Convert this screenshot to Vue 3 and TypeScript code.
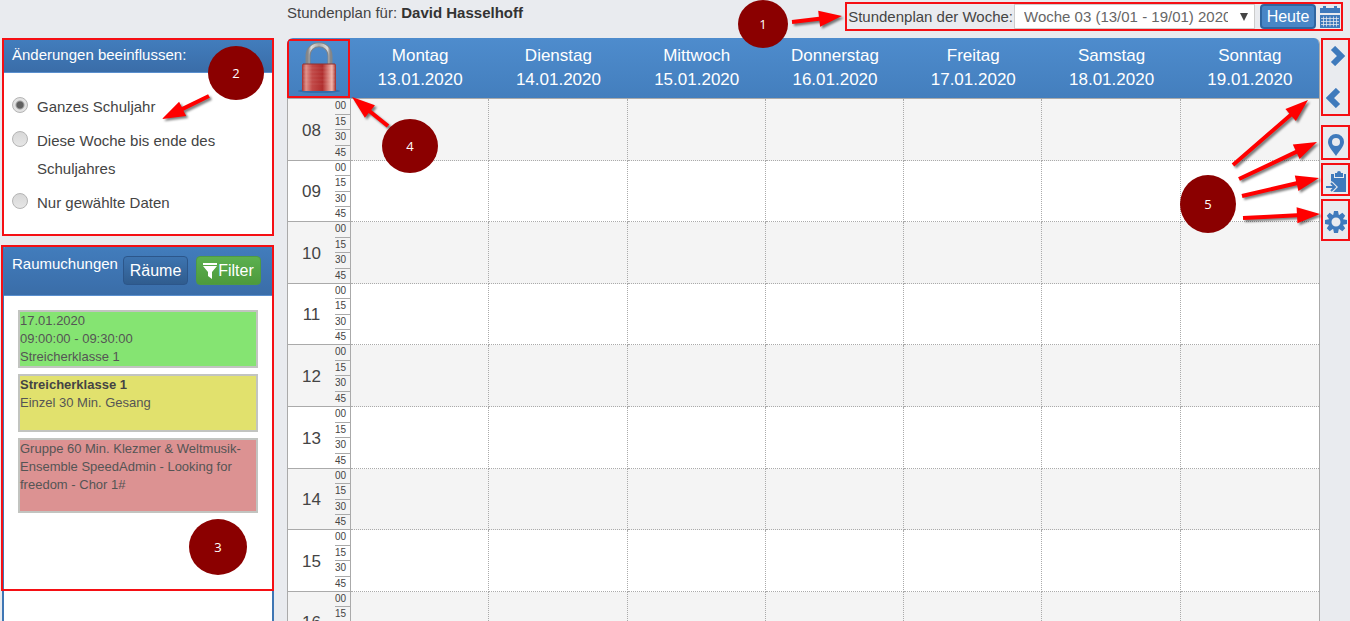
<script setup lang="ts">
import { ref } from 'vue'

interface Day { name: string; date: string }
interface Arrow { x1: number; y1: number; x2: number; y2: number }
interface Badge { n: number; cx: number; cy: number; rx: number; ry: number }

const scope = ref('year')
const scopes = [
  { id: 'year', label: 'Ganzes Schuljahr' },
  { id: 'rest', label: 'Diese Woche bis ende des Schuljahres' },
  { id: 'dates', label: 'Nur gewählte Daten' },
]

const days: Day[] = [
  { name: 'Montag', date: '13.01.2020' },
  { name: 'Dienstag', date: '14.01.2020' },
  { name: 'Mittwoch', date: '15.01.2020' },
  { name: 'Donnerstag', date: '16.01.2020' },
  { name: 'Freitag', date: '17.01.2020' },
  { name: 'Samstag', date: '18.01.2020' },
  { name: 'Sonntag', date: '19.01.2020' },
]
const hours = ['08', '09', '10', '11', '12', '13', '14', '15', '16']
const quarters = ['00', '15', '30', '45']

const leftBadges: Badge[] = [
  { n: 2, cx: 236, cy: 73, rx: 28, ry: 27 },
  { n: 3, cx: 218, cy: 547, rx: 29, ry: 28 },
  { n: 4, cx: 410, cy: 146, rx: 28, ry: 27 },
]
const leftArrows: Arrow[] = [
  { x1: 209, y1: 96, x2: 162, y2: 119 },
  { x1: 388, y1: 126, x2: 352, y2: 97 },
]
const rightBadges: Badge[] = [
  { n: 1, cx: 763, cy: 24, rx: 25, ry: 24 },
  { n: 5, cx: 1208, cy: 204, rx: 28, ry: 29 },
]
const rightArrows: Arrow[] = [
  { x1: 792, y1: 22, x2: 842, y2: 16 },
  { x1: 1233, y1: 165, x2: 1308, y2: 100 },
  { x1: 1239, y1: 179, x2: 1317, y2: 142 },
  { x1: 1242, y1: 196, x2: 1319, y2: 178 },
  { x1: 1243, y1: 218, x2: 1320, y2: 214 },
]

// Outline of an arrow: a 4px shaft that ends in a triangular head.
function arrowPoints(a: Arrow): string {
  const len = Math.hypot(a.x2 - a.x1, a.y2 - a.y1)
  const ux = (a.x2 - a.x1) / len
  const uy = (a.y2 - a.y1) / len
  const at = (d: number, side: number) =>
    `${(a.x1 + ux * d - uy * side).toFixed(1)},${(a.y1 + uy * d + ux * side).toFixed(1)}`
  const neck = len - 23
  return [at(0, -2), at(neck, -2), at(neck, -8), at(len, 0), at(neck, 8), at(neck, 2), at(0, 2)].join(' ')
}
</script>

<template>
  <div class="page">
    <aside class="sidebar">
      <section class="panel scope-panel marked">
        <h2 class="panel-head">Änderungen beeinflussen:</h2>
        <div class="scope-list">
          <label v-for="s in scopes" :key="s.id" class="scope">
            <input v-model="scope" type="radio" name="scope" :value="s.id" />
            <span>{{ s.label }}</span>
          </label>
        </div>
      </section>

      <section class="panel rooms-panel">
        <div class="rooms-area marked">
          <div class="panel-head rooms-head">
            <h2>Raumuchungen</h2>
            <button type="button" class="btn btn-rooms">Räume</button>
            <button type="button" class="btn btn-filter">
              <svg width="14" height="16" viewBox="0 0 14 16" aria-hidden="true">
                <path d="M0 0h14v2H0zM0 3h14L9 9v7l-4-3V9z" fill="#fff" />
              </svg>Filter
            </button>
          </div>
          <div class="cards">
            <article class="card green">17.01.2020<br />09:00:00 - 09:30:00<br />Streicherklasse 1</article>
            <article class="card yellow"><strong>Streicherklasse 1</strong><br />Einzel 30 Min. Gesang</article>
            <article class="card red">Gruppe 60 Min. Klezmer &amp; Weltmusik-Ensemble SpeedAdmin - Looking for freedom - Chor 1#</article>
          </div>
        </div>
      </section>
    </aside>

    <header class="topbar">
      <div class="title">Stundenplan für: <strong>David Hasselhoff</strong></div>
      <div class="week marked">
        <label for="week">Stundenplan der Woche:</label>
        <span class="select-wrap">
          <select id="week">
            <option>Woche 03 (13/01 - 19/01) 2020</option>
          </select>
          <svg class="caret" width="8" height="8" viewBox="0 0 8 8" aria-hidden="true"><path d="M0 0h8L4 8z" fill="#444" /></svg>
        </span>
        <button type="button" class="btn btn-today">Heute</button>
        <button type="button" class="icon-btn" aria-label="Kalender">
          <svg width="20" height="22" viewBox="0 0 20 22" fill="#3f7abc" aria-hidden="true">
            <path d="M0 2h3V0h3v2h8V0h3v2h3v5H0zM0 9h20v13H0z" />
            <path d="M1 12.500h18M1 15.500h18M1 18.500h18" stroke="#e9ebef" stroke-opacity=".75" />
            <path d="M3.500 10.500v10M6.500 10.500v10M10 10.500v10M13.500 10.500v10M16.500 10.500v10" stroke="#e9ebef" stroke-opacity=".75" />
          </svg>
        </button>
      </div>
    </header>

    <main class="schedule">
      <table>
        <colgroup>
          <col class="col-hour" /><col class="col-quarter" /><col v-for="d in days" :key="d.date" />
        </colgroup>
        <thead>
          <tr>
            <th colspan="2" class="lock-cell">
              <button type="button" class="lock marked" aria-label="Gesperrt">
                <svg width="44" height="52" viewBox="0 0 44 52" aria-hidden="true">
                  <defs>
                    <linearGradient id="lockBody">
                      <stop offset="0" stop-color="#a52f30" />
                      <stop offset=".12" stop-color="#e09088" />
                      <stop offset=".3" stop-color="#c24a48" />
                      <stop offset=".6" stop-color="#b02e2e" />
                      <stop offset=".88" stop-color="#f3b5aa" />
                      <stop offset="1" stop-color="#9d2929" />
                    </linearGradient>
                    <linearGradient id="lockBow">
                      <stop offset="0" stop-color="#87888a" />
                      <stop offset=".15" stop-color="#ddd" />
                      <stop offset=".5" stop-color="#aaa" />
                      <stop offset=".88" stop-color="#ddd" />
                      <stop offset="1" stop-color="#87888a" />
                    </linearGradient>
                  </defs>
                  <ellipse cx="22" cy="49" rx="21" ry="2" fill="#285f9c" opacity=".6" />
                  <path d="M11 24V14C11 -1 33 -1 33 14v10" fill="none" stroke="#808488" stroke-width="5" />
                  <path d="M11 24V14C11 -1 33 -1 33 14v10" fill="none" stroke="url(#lockBow)" stroke-width="3" />
                  <rect x="5" y="22" width="34" height="27" rx="1" fill="url(#lockBody)" />
                  <path d="M6 22h32" stroke="#8d3030" />
                  <path d="M6 26h32M6 30h32M6 34h32M6 38h32M6 42h32" stroke="#fff" stroke-opacity=".08" />
                </svg>
              </button>
            </th>
            <th v-for="d in days" :key="d.date" scope="col">{{ d.name }}<br />{{ d.date }}</th>
          </tr>
        </thead>
        <tbody>
          <tr v-for="h in hours" :key="h">
            <th scope="row" class="hour">{{ h }}</th>
            <td class="quarter-cell">
              <div class="quarters"><span v-for="q in quarters" :key="q">{{ q }}</span></div>
            </td>
            <td v-for="d in days" :key="d.date" class="slot"></td>
          </tr>
        </tbody>
      </table>
    </main>

    <nav class="rail" aria-label="Werkzeuge">
      <div class="rail-group arrows marked">
        <button type="button" class="icon-btn" aria-label="Nächste Woche">
          <svg width="20" height="20" viewBox="0 0 20 20" aria-hidden="true"><path d="M7 2l8 8-8 8" fill="none" stroke="#3f7abc" stroke-width="6" /></svg>
        </button>
        <button type="button" class="icon-btn" aria-label="Vorherige Woche">
          <svg width="20" height="20" viewBox="0 0 20 20" aria-hidden="true"><path d="M12 2l-8 8 8 8" fill="none" stroke="#3f7abc" stroke-width="6" /></svg>
        </button>
      </div>
      <div class="rail-group pin marked">
        <button type="button" class="icon-btn" aria-label="Ort">
          <svg width="16" height="22" viewBox="0 0 16 22" aria-hidden="true"><path fill="#3f7abc" fill-rule="evenodd" d="M8 0a8 8 0 0 1 8 8c0 5-5 9-8 14C5 17 0 13 0 8a8 8 0 0 1 8-8zm0 4a4 4 0 1 0 0 8 4 4 0 0 0 0-8z" /></svg>
        </button>
      </div>
      <div class="rail-group paste marked">
        <button type="button" class="icon-btn" aria-label="Einfügen">
          <svg width="20" height="21" viewBox="0 0 20 21" fill="#3f7abc" aria-hidden="true">
            <path d="M5 3h3v4h10V3h2v18H7l5-5-5-5-2-1z" />
            <path d="M9 2h2a2 2 0 0 1 4 0h2v4H9z" />
            <path d="M0 16h8M5 12l4 4-4 4" fill="none" stroke="#3f7abc" stroke-width="2" />
          </svg>
        </button>
      </div>
      <div class="rail-group gear marked">
        <button type="button" class="icon-btn" aria-label="Einstellungen">
          <svg width="22" height="22" viewBox="-11 -11 22 22" aria-hidden="true">
            <circle r="6" fill="none" stroke="#3f7abc" stroke-width="3" />
            <path v-for="i in 8" :key="i" d="M-3 -6l1-5h4l1 5z" fill="#3f7abc" :transform="`rotate(${i * 45})`" />
          </svg>
        </button>
      </div>
    </nav>

    <svg class="notes notes-left" width="450" height="621" viewBox="0 0 450 621">
      <polygon v-for="(a, i) in leftArrows" :key="i" class="arrow" :points="arrowPoints(a)" />
      <g v-for="b in leftBadges" :key="b.n">
        <ellipse :cx="b.cx" :cy="b.cy" :rx="b.rx" :ry="b.ry" fill="#8b0000" />
        <text :x="b.cx" :y="b.cy + 5">{{ b.n }}</text>
      </g>
    </svg>
    <svg class="notes notes-right" width="650" height="621" viewBox="700 0 650 621">
      <polygon v-for="(a, i) in rightArrows" :key="i" class="arrow" :points="arrowPoints(a)" />
      <g v-for="b in rightBadges" :key="b.n">
        <ellipse :cx="b.cx" :cy="b.cy" :rx="b.rx" :ry="b.ry" fill="#8b0000" />
        <text :x="b.cx" :y="b.cy + 5">{{ b.n }}</text>
      </g>
    </svg>
  </div>
</template>

<style>
body {
  margin: 0;
  background: #e9ebef;
}
</style>

<style scoped>
.page {
  position: relative;
  display: grid;
  grid-template-columns: 287px minmax(0, 1fr) 30px;
  grid-template-rows: 38px minmax(0, 1fr);
  height: 100vh;
  overflow: hidden;
  background: #e9ebef;
  color: #444;
  font-family: "Liberation Sans", Arial, sans-serif;
  font-size: 15px;
}
.page * {
  box-sizing: border-box;
}
h2 {
  margin: 0;
  font-size: 15px;
  font-weight: 400;
}
button {
  font-family: inherit;
  cursor: pointer;
}
.marked {
  position: relative;
}
.marked::after {
  content: "";
  position: absolute;
  inset: 0;
  border: 2px solid #f50f14;
  pointer-events: none;
}

/* Sidebar */
.sidebar {
  grid-row: 1 / 3;
  display: flex;
  flex-direction: column;
  gap: 9px;
  padding: 38px 13px 0 2px;
}
.panel {
  background: #fff;
  border: 1px solid #3f76b4;
  border-radius: 5px 5px 0 0;
}
.scope-panel::after {
  inset: -1px;
}
.panel-head {
  height: 34px;
  padding: 0 9px;
  line-height: 32px;
  color: #fff;
  background: linear-gradient(#427dbd, #3a6da8);
  border-bottom: 1px solid #5a8fce;
  border-radius: 4px 4px 0 0;
}
.scope-list {
  display: flex;
  flex-direction: column;
  gap: 6px;
  padding: 20px 50px 18px 9px;
}
.scope {
  display: flex;
  align-items: flex-start;
  gap: 9px;
  line-height: 28px;
}
.scope input {
  flex: none;
  appearance: none;
  width: 16px;
  height: 16px;
  margin: 4px 0 0;
  border: 1px solid #b4b4b4;
  border-radius: 50%;
  background: linear-gradient(#d8d8d8, #e6e6e6);
}
.scope input:checked {
  background: radial-gradient(circle, #606060 0 3px, #e2e2e2 5px);
}
.rooms-panel {
  flex: 1;
  border-width: 0 2px;
}
.rooms-area {
  min-height: 346px;
}
.rooms-area::after {
  inset: 0 -2px 0 -3px;
}
.rooms-head {
  display: flex;
  align-items: flex-start;
  height: 51px;
  padding: 11px 11px 0 8px;
}
.rooms-head h2 {
  flex: 1;
  line-height: 15px;
}
.btn {
  display: inline-flex;
  align-items: center;
  justify-content: center;
  padding: 0;
  color: #fff;
  font-size: 16px;
  border-radius: 4px;
}
.btn-rooms,
.btn-filter {
  width: 65px;
  height: 29px;
}
.btn-rooms {
  margin-right: 8px;
  background: linear-gradient(#3d74b0, #305c8e);
  border: 1px solid #2c568a;
}
.btn-filter {
  gap: 1px;
  background: linear-gradient(#5cb04f, #4d9a3c);
  border: 1px solid #4e9a44;
}
.cards {
  display: flex;
  flex-direction: column;
  gap: 6px;
  padding: 14px 14px 0;
}
.card {
  min-height: 58px;
  border: 2px solid #c2c4c0;
  font-size: 13px;
  line-height: 18px;
  color: #555;
}
.card strong {
  color: #444;
}
.green {
  background: #85e472;
}
.yellow {
  background: #e1e16d;
}
.red {
  min-height: 75px;
  background: #dc9292;
}

/* Top bar */
.topbar {
  grid-column: 2 / 4;
  display: flex;
  justify-content: space-between;
  align-items: flex-start;
  padding: 2px 7px 0 0;
}
.title {
  line-height: 22px;
}
.title strong {
  color: #333;
}
.week {
  display: flex;
  align-items: center;
  height: 29px;
  padding: 0 3px;
}
.select-wrap {
  position: relative;
  width: 241px;
  margin: 0 5px 0 1px;
}
.week select {
  display: block;
  appearance: none;
  width: 100%;
  height: 25px;
  padding: 0 26px 0 9px;
  border: 1px solid #ccc;
  border-radius: 0;
  background: #fff;
  color: #666;
  font: 15px "Liberation Sans", Arial, sans-serif;
}
.caret {
  position: absolute;
  right: 7px;
  top: 9px;
  pointer-events: none;
}
.btn-today {
  width: 56px;
  height: 25px;
  margin-right: 4px;
  background: #4886c6;
  border: 2px solid #2f659f;
}
.icon-btn {
  display: flex;
  padding: 0;
  border: 0;
  background: none;
}

/* Timetable */
.schedule {
  grid-column: 2;
  overflow: hidden;
}
table {
  width: 100%;
  table-layout: fixed;
  border-spacing: 0;
  border-radius: 6px 6px 0 0;
  overflow: hidden;
  border-right: 1px solid #aaa;
}
.col-hour {
  width: 48px;
}
.col-quarter {
  width: 16px;
}
thead tr {
  background: linear-gradient(#4e8ccd, #437ebd);
}
thead th {
  height: 61px;
  padding: 0;
  border-bottom: 1px solid #aaa;
  color: #fff;
  font-size: 17px;
  font-weight: 400;
  line-height: 24px;
}
.lock {
  display: flex;
  justify-content: center;
  align-items: center;
  width: 63px;
  height: 59px;
  padding: 0;
  border: 0;
  background: none;
}
tbody tr {
  height: 61px;
  background: #fff;
}
tbody tr:nth-child(5n + 1),
tbody tr:nth-child(5n + 3),
tbody tr:nth-child(5n + 5) {
  height: 62px;
}
tbody tr:nth-child(odd) {
  background: #f4f4f4;
}
tbody th,
tbody td {
  height: inherit;
  padding: 0;
}
tbody .hour {
  padding-top: 2px;
  border-left: 1px solid #aaa;
  border-bottom: 1px solid #aaa;
  font-size: 17px;
  font-weight: 400;
}
.quarter-cell {
  border-right: 1px solid #aaa;
  border-bottom: 1px solid #aaa;
}
.quarters {
  display: flex;
  flex-direction: column;
  height: 100%;
  font-size: 10px;
  line-height: 14px;
}
.quarters span {
  flex: 1;
  border-bottom: 1px solid #aaa;
}
.quarters span:last-child {
  border-bottom: 0;
}
.slot {
  border-right: 1px dotted #aaa;
  border-bottom: 1px dotted #aaa;
}
.slot:last-child {
  border-right: 0;
}

/* Right-hand tools */
.rail {
  grid-column: 3;
  display: flex;
  flex-direction: column;
  gap: 3px;
  padding: 0 0 0 1px;
}
.rail-group {
  display: flex;
  flex-direction: column;
  align-items: center;
  justify-content: center;
  height: 35px;
}
.arrows {
  gap: 22px;
  height: 78px;
  margin-bottom: 6px;
}
.pin {
  padding-top: 4px;
}
.paste {
  height: 33px;
  padding-top: 4px;
}
.gear {
  height: 42px;
  padding-top: 4px;
}

/* Numbered callouts */
.notes {
  position: absolute;
  top: 0;
  pointer-events: none;
}
.notes-left {
  left: 0;
}
.notes-right {
  right: 0;
}
.arrow {
  fill: #ff0000;
  filter: drop-shadow(2px 2px 1px rgba(0, 0, 0, 0.5));
}
.notes text {
  fill: #fff;
  font-family: "Open Sans", "Noto Sans", sans-serif;
  font-size: 13px;
  text-anchor: middle;
}
</style>
